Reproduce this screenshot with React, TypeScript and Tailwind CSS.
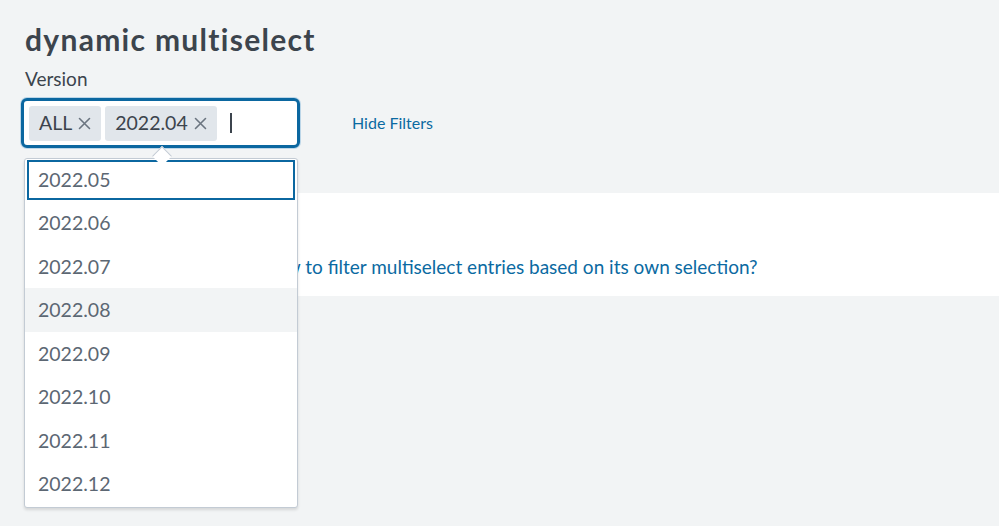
import React from "react";

const versions = ["2022.05", "2022.06", "2022.07", "2022.08", "2022.09", "2022.10", "2022.11", "2022.12"];

function Chip({ label }: { label: string }) {
    return (
        <div className="flex items-center h-[35px] px-[10px] gap-[6px] rounded-[3px] bg-[#e1e6eb] text-[#3c444d] text-[19.5px]">
            <span>{label}</span>
            <svg width="13" height="13" viewBox="0 0 13 13" className="mt-[1px]">
                <path d="M1.5 1.5 L11.5 11.5 M11.5 1.5 L1.5 11.5" stroke="#6b7580" strokeWidth="1.6" strokeLinecap="round" />
            </svg>
        </div>
    );
}

export default function App() {
    return (
        <div
            className="relative min-h-screen bg-[#f2f4f5] overflow-hidden"
            style={{ fontFamily: "Lato, 'Noto Sans', sans-serif" }}
        >
            <div className="pl-[25px] pt-[20px]">
                <h1 className="text-[30px] leading-[38px] font-bold tracking-[1.3px] text-[#3c444d]">dynamic multiselect</h1>
                <div className="mt-[10px] text-[19px] leading-[22px] text-[#3c444d]">Version</div>
            </div>

            {/* filter row */}
            <div className="flex items-center pl-[21px] mt-[8px]">
                <div className="relative flex items-center gap-[4px] w-[279px] h-[50px] pl-[5px] rounded-[6px] border-[3px] border-[#0b67a0] bg-white shadow-[0_0_0_1px_#bcd6e8]">
                    <Chip label="ALL" />
                    <Chip label="2022.04" />
                    <div className="ml-[9px] w-[2px] h-[20px] bg-[#3c444d]" />
                </div>
                <a className="ml-[52px] text-[16px] text-[#0b6aa2]">Hide Filters</a>
            </div>

            {/* panel */}
            <div className="ml-[24px] mt-[45px] h-[103px] bg-white flex items-center">
                <a className="ml-[237px] mt-[46px] text-[19px] text-[#0b6aa2]">
                    How to filter multiselect entries based on its own selection?
                </a>
            </div>

            {/* dropdown */}
            <div className="absolute left-[24px] top-[158px] w-[274px] rounded-[3px] border border-[#c3cbd4] bg-white shadow-[0_2px_3px_rgba(0,0,0,0.12)] pt-[1px] pb-[1px] px-[2px]">
                <div className="absolute left-[130px] -top-[10px] w-[14px] h-[14px] rotate-45 bg-white border-l border-t border-[#c3cbd4]" />
                <div className="flex items-center h-[40px] mb-[1px] px-[9px] border-2 border-[#0b67a0] text-[19.5px] text-[#5c6773]">
                    {versions[0]}
                </div>
                {versions.slice(1).map((v, i) => (
                    <div
                        key={v}
                        className={
                            i === 2
                                ? "flex items-center h-[43.5px] -mx-[2px] px-[13px] bg-[#f2f4f5] text-[19.5px] text-[#5c6773]"
                                : "flex items-center h-[43.5px] px-[11px] text-[19.5px] text-[#5c6773]"
                        }
                    >
                        {v}
                    </div>
                ))}
            </div>
        </div>
    );
}
